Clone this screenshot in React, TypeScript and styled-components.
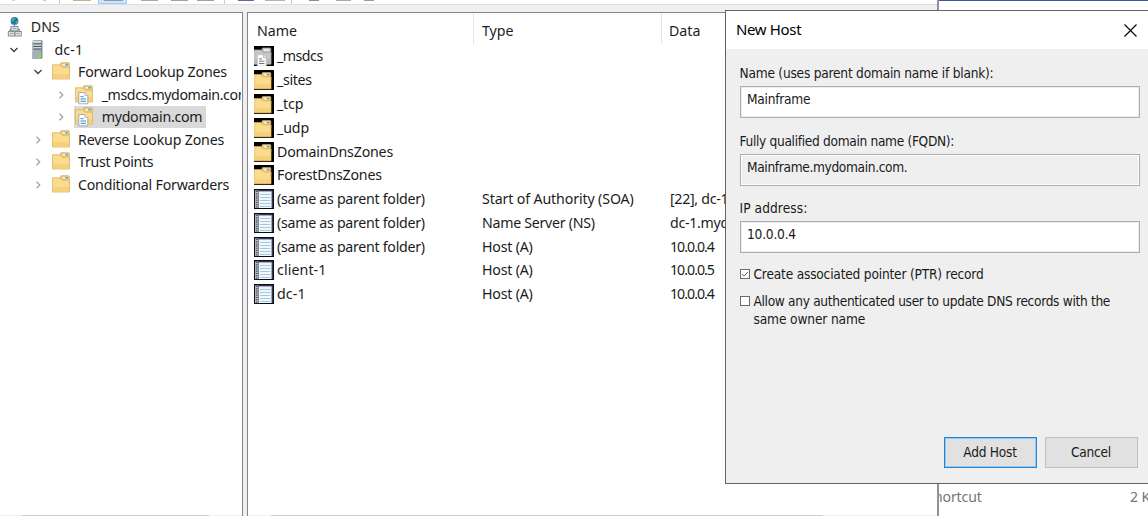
import React from "react";
import styled, { createGlobalStyle, css } from "styled-components";

const Global = createGlobalStyle`
  * { box-sizing: border-box; }
  body { margin: 0; background: #fff; overflow: hidden; }
`;

const uiFont = css`
  font-family: "Noto Sans", "Open Sans", sans-serif;
  white-space: pre;
  color: #1c1c1c;
`;

const Desktop = styled.div`
  position: relative;
  width: 1148px;
  height: 516px;
  overflow: hidden;
  display: flex;
  background: #fff;
`;

const Manager = styled.div`
  width: 939px;
  height: 516px;
  display: flex;
  flex-direction: column;
  background: #efefef;
  border-right: 2px solid #8f9296;
`;

const Toolbar = styled.div`
  height: 5px;
  flex: none;
  display: flex;
  align-items: flex-start;
  background: #fff;
  border-bottom: 1px solid #dedede;
  margin-bottom: 7px;
`;

const ToolPiece = styled.span<{ $gap: number; $w: number; $h?: number; $c: string }>`
  flex: none;
  margin-left: ${(p) => p.$gap}px;
  width: ${(p) => p.$w}px;
  height: ${(p) => p.$h ?? 1}px;
  background: ${(p) => p.$c};
`;

const ActiveTool = styled.span`
  flex: none;
  width: 29px;
  height: 4px;
  margin-left: 7px;
  padding: 0 4px;
  background: #cce4f9;
  border: solid #99cdf5;
  border-width: 0 1px 1px;
  display: flex;
`;

const Panes = styled.div`
  flex: 1;
  min-height: 0;
  display: flex;
  justify-content: space-between;
`;

const TreePane = styled.div`
  width: 243px;
  display: flex;
  flex-direction: column;
  overflow: hidden;
  background: #fff;
  border-top: 1px solid #828790;
  border-right: 1px solid #828790;
`;

const ListPane = styled.div`
  width: 690px;
  display: flex;
  flex-direction: column;
  overflow: hidden;
  background: #fff;
  border-top: 1px solid #828790;
  border-left: 1px solid #828790;
`;

const ScrollTrack = styled.div`
  flex: none;
  height: 1px;
  margin-top: auto;
  background: #f0f0f0;
`;

const ScrollThumb = styled.div<{ $start: number; $w: number }>`
  height: 1px;
  margin-left: ${(p) => p.$start}px;
  width: ${(p) => p.$w}px;
  background: #cdcdcd;
`;

const Tree = styled.div`
  padding-top: 3px;
  width: 241px;
  overflow: hidden;
`;

const TreeRow = styled.div<{ $indent: number }>`
  height: 22.5px;
  display: flex;
  align-items: center;
  padding-left: ${(p) => p.$indent}px;
`;

const Chevron = styled.svg`
  flex: none;
  width: 12px;
  height: 12px;
  margin-right: 7px;
`;

const TreeItem = styled.div<{ $selected?: boolean }>`
  height: 22px;
  display: flex;
  align-items: center;
  background: ${(p) => (p.$selected ? "#d9d9d9" : "transparent")};
`;

const TreeIcon = styled.svg<{ $gap: number }>`
  flex: none;
  width: 20px;
  height: 20px;
  margin-right: ${(p) => p.$gap}px;
`;

const TreeLabel = styled.span<{ $ls: number }>`
  ${uiFont}
  font-size: 14.2px;
  line-height: 20px;
  letter-spacing: ${(p) => p.$ls}px;
  padding-right: 4px;
`;

const HeaderRow = styled.div`
  flex: none;
  height: 31px;
  margin-bottom: 0.6px;
  display: flex;
`;

const HeaderCell = styled.div<{ $w: number; $pad: number }>`
  ${uiFont}
  width: ${(p) => p.$w}px;
  padding-left: ${(p) => p.$pad}px;
  border-right: 1px solid #e5e5e5;
  font-size: 14.2px;
  line-height: 35px;
`;

const Row = styled.div`
  flex: none;
  height: 23.78px;
  display: flex;
  align-items: center;
  padding-left: 6px;
`;

const RowIcon = styled.svg`
  flex: none;
  width: 20px;
  height: 20px;
  margin-right: 3px;
`;

const Cell = styled.span<{ $w: number; $ls: number }>`
  ${uiFont}
  flex: none;
  width: ${(p) => p.$w}px;
  font-size: 14.2px;
  line-height: 20px;
  letter-spacing: ${(p) => p.$ls}px;
`;

const Explorer = styled.div`
  flex: 1;
  height: 516px;
  display: flex;
  align-items: flex-end;
  justify-content: space-between;
  overflow: hidden;
  border-top: 1px solid #2c6096;
  padding-bottom: 9px;
`;

const ExplorerText = styled.span<{ $shift: number }>`
  ${uiFont}
  color: #757575;
  font-size: 14px;
  line-height: 20px;
  letter-spacing: -0.1px;
  margin-left: ${(p) => p.$shift}px;
  margin-right: -11px;
`;

const Dialog = styled.div`
  position: absolute;
  left: 725px;
  top: 10px;
  width: 440px;
  height: 474px;
  background: #efefef;
  border: 1px solid #646464;
  display: flex;
  flex-direction: column;
`;

const TitleBar = styled.div`
  height: 38px;
  flex: none;
  display: flex;
  align-items: center;
  background: #fff;
  padding-left: 10px;
`;

const Title = styled.span`
  ${uiFont}
  width: 388px;
  font-size: 15px;
  line-height: 36px;
  height: 38px;
  letter-spacing: -0.35px;
  color: #000;
`;

const Form = styled.div`
  width: 400px;
  margin-left: 13.5px;
  padding-top: 13px;
  display: flex;
  flex-direction: column;
`;

const tahoma = css`
  font-family: "DejaVu Sans Condensed", "DejaVu Sans", sans-serif;
  font-stretch: condensed;
  font-size: 13.6px;
  color: #1a1a1a;
  white-space: pre;
`;

const Label = styled.label<{ $ls: number }>`
  ${tahoma}
  height: 24px;
  line-height: 23px;
  letter-spacing: ${(p) => p.$ls}px;
`;

const Field = styled.div<{ $readOnly?: boolean; $ls: number }>`
  ${tahoma}
  height: 32px;
  margin-bottom: 11.7px;
  padding-left: 6.5px;
  line-height: 24px;
  letter-spacing: ${(p) => p.$ls}px;
  border: 1px solid #adadad;
  background: ${(p) => (p.$readOnly ? "#efefef" : "#fff")};
  box-shadow: inset 0 0 0 1px ${(p) => (p.$readOnly ? "#fff" : "#ededed")};
`;

const CheckRow = styled.div`
  display: flex;
  align-items: flex-start;
  margin-bottom: 9px;
`;

const CheckBox = styled.svg`
  flex: none;
  width: 10px;
  height: 10px;
  margin: 4px 4px 0 0;
`;

const CheckText = styled.span<{ $ls: number }>`
  ${tahoma}
  display: block;
  line-height: 18px;
  letter-spacing: ${(p) => p.$ls}px;
`;

const Actions = styled.div`
  display: flex;
  gap: 8px;
  margin: auto 0 15px 218px;
`;

const Button = styled.button<{ $primary?: boolean }>`
  ${tahoma}
  width: 93px;
  height: 31px;
  padding: 0 1px 1px 0;
  letter-spacing: -0.25px;
  background: #e1e1e1;
  border: ${(p) => (p.$primary ? "1.5px solid #1f83d6" : "1px solid #bfbfbf")};
  box-shadow: ${(p) => (p.$primary ? "inset 0 0 0 1px #9cc8ec" : "none")};
`;

const FolderShapes = ({ gray }: { gray?: boolean }) => (
  <>
    <path d="M9.500 5V1.500q0-.8.8-.8h7.200q.8 0 .8.800V8H9.500z" fill={gray ? "#c4c4c4" : "#ecca7c"} stroke={gray ? "#999" : "#cfa953"} strokeWidth=".7" />
    <rect x="11.500" y="2" width="5.500" height="1.500" fill="#f8f6ee" />
    <rect x="14.300" y="2" width="2.500" height="1.500" fill={gray ? "#e4e4e4" : "#4aa0e0"} />
    <path d="M1.500 2.800h7.300l2.200 2.400h7.500V17h-17z" fill={gray ? "#c6c6c6" : "#fbdc8f"} stroke={gray ? "#a5a5a5" : "#dbb35c"} strokeWidth=".8" />
    <path d="M2 12h16v4.600H2z" fill={gray ? "#bababa" : "#f6d07b"} />
  </>
);

const PageShapes = ({ gray }: { gray?: boolean }) => (
  <>
    <path d="M4.800 7.500h6l3 3v8.300h-9z" fill="#fff" stroke={gray ? "#bbb" : "#8d9aa5"} strokeWidth=".8" />
    <path d="M10.800 7.500v3h3" fill="#e4e8ec" stroke="#a6b1ba" strokeWidth=".7" />
    <path d="M6.500 11.700h3M6.500 14h5.500M6.500 16.300h5.500" stroke={gray ? "#777" : "#4582c8"} strokeWidth="1" />
  </>
);

const treeArt: Record<string, React.ReactNode> = {
  folder: <FolderShapes />,
  zone: (
    <>
      <FolderShapes />
      <PageShapes />
    </>
  ),
  server: (
    <>
      <path d="M5.500 1l1-.8h9V17.500l-1 1.500h-9z" fill="#7c8d93" />
      <path d="M5.500 1h8.500V19H5.500z" fill="#a3b1b6" />
      <path d="M5.500 1h8.500v1.500H5.500z" fill="#dce5e8" />
      <path d="M6.500 4h7.500M6.500 6.500h7.500M6.500 9h7.500" stroke="#455359" strokeWidth="1" />
      <path d="M6.500 5.200h7.500M6.500 7.700h7.500" stroke="#e3eaec" strokeWidth=".9" />
      <circle cx="12.800" cy="16" r="1.700" fill="#7be62b" />
    </>
  ),
  dns: (
    <>
      <circle cx="9.500" cy="3.900" r="3.900" fill="#2173bd" />
      <path d="M6.500 2.500Q8 0 10.500.5L9.500 3 8 5 6.500 4zM10.500 4.500l2.500-1q.5 2.500-1.500 4z" fill="#48b85b" />
      <path d="M9.500 8v5M5 14.500v-2h9.500v2" stroke="#6c7479" fill="none" />
      <g fill="#dfe4e7" stroke="#7f8a91" strokeWidth=".9">
        <rect x="6" y="9.500" width="7" height="4.300" />
        <rect x="3.300" y="14.500" width="6" height="4.500" />
        <rect x="10" y="14.500" width="6.300" height="4.500" />
      </g>
      <path d="M7.500 11.500h4M4.800 16.500h3M11.500 16.500h3" stroke="#969fa5" />
    </>
  ),
};

const rowArt: Record<string, React.ReactNode> = {
  folder: (
    <>
      <path d="M0 0h20v20H0z" fill="#000" />
      <g transform="translate(-1.500 1.800)">
        <FolderShapes />
      </g>
    </>
  ),
  gray: (
    <>
      <path d="M0 0h20v20H0z" fill="#000" />
      <g transform="translate(-1.500 1.200)">
        <FolderShapes gray />
        <PageShapes gray />
      </g>
    </>
  ),
  record: (
    <>
      <path d="M0 0h20v20H0z" fill="#0b0d1a" />
      <path d="M1 1.500h17.500V19H1z" fill="#5a6384" />
      <path d="M5 2.500h12.500V19H5z" fill="#f1f6fa" />
      <path d="M6 5.500h10.500M6 8.500h10.500M6 11.500h10.500M6 14.500h10.500M6 17.500h10.500" stroke="#a5c9de" strokeWidth="1" />
      <path d="M1 1.500h3V19H1z" fill="#b5b8bd" />
      <path d="M2.700 2V19" stroke="#45484e" strokeWidth="1.600" strokeDasharray="1 1.200" />
      <path d="M4.500 1.500V19" stroke="#8d94a2" strokeWidth=".7" />
    </>
  ),
};

type TreeNode = { label: string; icon: string; indent: number; chev?: "open" | "closed"; gap: number; ls: number; selected?: boolean };
const nodes: TreeNode[] = [
  { label: "DNS", icon: "dns", indent: 5, gap: 5.8, ls: 0 },
  { label: "dc-1", icon: "server", indent: 8, chev: "open", gap: 7.5, ls: 0.1 },
  { label: "Forward Lookup Zones", icon: "folder", indent: 32, chev: "open", gap: 7, ls: -0.18 },
  { label: "_msdcs.mydomain.com", icon: "zone", indent: 55, chev: "closed", gap: 7.7, ls: -0.4 },
  { label: "mydomain.com", icon: "zone", indent: 55, chev: "closed", gap: 7.7, ls: -0.28, selected: true },
  { label: "Reverse Lookup Zones", icon: "folder", indent: 32, chev: "closed", gap: 7, ls: -0.18 },
  { label: "Trust Points", icon: "folder", indent: 32, chev: "closed", gap: 7, ls: -0.3 },
  { label: "Conditional Forwarders", icon: "folder", indent: 32, chev: "closed", gap: 7, ls: -0.22 },
];

const records = [
  { icon: "gray", name: "_msdcs", nls: -0.5 },
  { icon: "folder", name: "_sites", nls: -0.35 },
  { icon: "folder", name: "_tcp", nls: -0.2 },
  { icon: "folder", name: "_udp", nls: -0.1 },
  { icon: "folder", name: "DomainDnsZones", nls: -0.2 },
  { icon: "folder", name: "ForestDnsZones", nls: -0.2 },
  { icon: "record", name: "(same as parent folder)", nls: -0.28, type: "Start of Authority (SOA)", tls: -0.13, data: "[22], dc-1", dls: -0.3 },
  { icon: "record", name: "(same as parent folder)", nls: -0.28, type: "Name Server (NS)", tls: -0.28, data: "dc-1.myd", dls: -0.3 },
  { icon: "record", name: "(same as parent folder)", nls: -0.28, type: "Host (A)", tls: -0.2, data: "10.0.0.4", dls: -1 },
  { icon: "record", name: "client-1", nls: 0.1, type: "Host (A)", tls: -0.2, data: "10.0.0.5", dls: -1 },
  { icon: "record", name: "dc-1", nls: 0.1, type: "Host (A)", tls: -0.2, data: "10.0.0.4", dls: -1 },
];

export default function App() {
  return (
    <Desktop>
      <Global />
      <Manager>
        <Toolbar>
          <ToolPiece $gap={12} $w={3} $c="#b9d7ee" />
          <ToolPiece $gap={28} $w={3} $c="#c9c9c9" />
          <ToolPiece $gap={13} $w={1} $h={4} $c="#c8c8c8" />
          <ToolPiece $gap={13} $w={18} $c="#cbb183" />
          <ActiveTool>
            <ToolPiece $gap={1} $w={19} $c="#8f9dab" />
          </ActiveTool>
          <ToolPiece $gap={14} $w={17} $c="#a9a9a9" />
          <ToolPiece $gap={13} $w={17} $c="#a0a0a0" />
          <ToolPiece $gap={9} $w={17} $c="#a0a0a0" />
          <ToolPiece $gap={10} $w={1} $h={4} $c="#c8c8c8" />
          <ToolPiece $gap={13} $w={16} $c="#636a92" />
          <ToolPiece $gap={11} $w={20} $c="#b4b4b4" />
          <ToolPiece $gap={6} $w={1} $h={4} $c="#c8c8c8" />
          <ToolPiece $gap={17} $w={10} $c="#8e8e8e" />
          <ToolPiece $gap={17} $w={15} $c="#a6a6b8" />
          <ToolPiece $gap={13} $w={10} $c="#9a9a9a" />
        </Toolbar>
        <Panes>
          <TreePane>
            <Tree>
              {nodes.map((n) => (
                <TreeRow key={n.label} $indent={n.indent}>
                  {n.chev && (
                    <Chevron viewBox="0 0 12 12" fill="none">
                      {n.chev === "open" ? (
                        <path d="M2.500 4L6 7.500l3.500-3.500" stroke="#404040" strokeWidth="1.300" />
                      ) : (
                        <path d="M4.500 2.800L7.800 6 4.500 9.200" stroke="#a0a0a0" strokeWidth="1.200" />
                      )}
                    </Chevron>
                  )}
                  <TreeItem $selected={n.selected}>
                    <TreeIcon viewBox="0 0 20 20" $gap={n.gap}>
                      {treeArt[n.icon]}
                    </TreeIcon>
                    <TreeLabel $ls={n.ls}>{n.label}</TreeLabel>
                  </TreeItem>
                </TreeRow>
              ))}
            </Tree>
            <ScrollTrack>
              <ScrollThumb $start={22} $w={187} />
            </ScrollTrack>
          </TreePane>
          <ListPane>
            <HeaderRow>
              <HeaderCell $w={226} $pad={9}>Name</HeaderCell>
              <HeaderCell $w={188} $pad={8}>Type</HeaderCell>
              <HeaderCell $w={200} $pad={7}>Data</HeaderCell>
            </HeaderRow>
            {records.map((r, i) => (
              <Row key={i}>
                <RowIcon viewBox="0 0 20 20">{rowArt[r.icon]}</RowIcon>
                <Cell $w={205} $ls={r.nls}>{r.name}</Cell>
                <Cell $w={188} $ls={r.tls ?? 0}>{r.type}</Cell>
                <Cell $w={200} $ls={r.dls ?? 0}>{r.data}</Cell>
              </Row>
            ))}
            <ScrollTrack>
              <ScrollThumb $start={23} $w={552} />
            </ScrollTrack>
          </ListPane>
        </Panes>
      </Manager>
      <Explorer>
        <ExplorerText $shift={-5}>hortcut</ExplorerText>
        <ExplorerText $shift={0}>2 KB</ExplorerText>
      </Explorer>
      <Dialog>
        <TitleBar>
          <Title>New Host</Title>
          <svg width="13" height="13" viewBox="0 0 13 13">
            <path d="M.5.5l12 12M12.500.5l-12 12" stroke="#000" strokeWidth="1.100" />
          </svg>
        </TitleBar>
        <Form>
          <Label $ls={-0.22}>Name (uses parent domain name if blank):</Label>
          <Field $ls={-0.25}>Mainframe</Field>
          <Label $ls={-0.32}>Fully qualified domain name (FQDN):</Label>
          <Field $ls={-0.34} $readOnly>Mainframe.mydomain.com.</Field>
          <Label $ls={0.08}>IP address:</Label>
          <Field $ls={-0.2}>10.0.0.4</Field>
          <CheckRow>
            <CheckBox viewBox="0 0 10 10">
              <rect x=".5" y=".5" width="9" height="9" fill="#fff" stroke="#6b6b6b" />
              <path d="M2 5l2 2.200L8 2.800" fill="none" stroke="#666" />
            </CheckBox>
            <CheckText $ls={-0.19}>Create associated pointer (PTR) record</CheckText>
          </CheckRow>
          <CheckRow>
            <CheckBox viewBox="0 0 10 10">
              <rect x=".5" y=".5" width="9" height="9" fill="#fff" stroke="#6b6b6b" />
            </CheckBox>
            <div>
              <CheckText $ls={-0.32}>Allow any authenticated user to update DNS records with the</CheckText>
              <CheckText $ls={-0.13}>same owner name</CheckText>
            </div>
          </CheckRow>
        </Form>
        <Actions>
          <Button $primary>Add Host</Button>
          <Button>Cancel</Button>
        </Actions>
      </Dialog>
    </Desktop>
  );
}
